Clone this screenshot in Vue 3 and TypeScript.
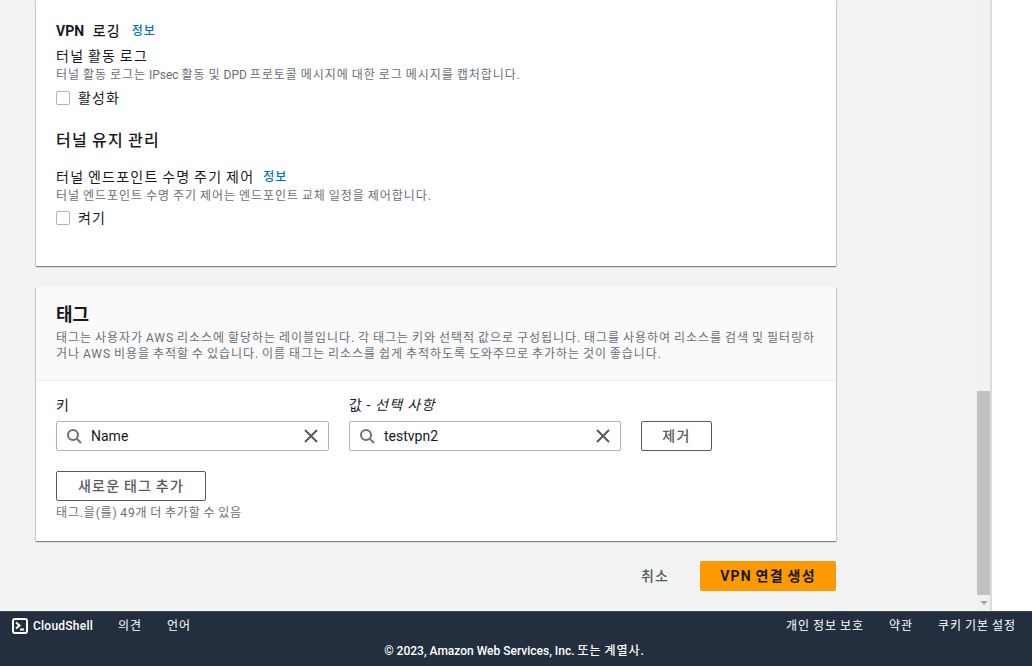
<script setup lang="ts">
const rightLinks: string[] = ['개인 정보 보호', '약관', '쿠키 기본 설정']
</script>

<template>
  <div class="page">
    <div class="body">
      <main class="content">
        <section class="card first">
          <div class="heading-row">
            <h3 class="h3 vpn"><span class="en">VPN</span> 로깅</h3>
            <a class="info">정보</a>
          </div>
          <div class="label">터널 활동 로그</div>
          <p class="desc">터널 활동 로그는 <span class="en">IPsec</span> 활동 및 <span class="en">DPD</span> 프로토콜 메시지에 대한 로그 메시지를 캡처합니다.</p>
          <label class="check"><span class="box"></span>활성화</label>
          <h3 class="h3 keep">터널 유지 관리</h3>
          <div class="heading-row second">
            <span class="label flat">터널 엔드포인트 수명 주기 제어</span>
            <a class="info">정보</a>
          </div>
          <p class="desc">터널 엔드포인트 수명 주기 제어는 엔드포인트 교체 일정을 제어합니다.</p>
          <label class="check"><span class="box"></span>켜기</label>
        </section>

        <section class="card tags">
          <header class="tags-head">
            <h2 class="h2">태그</h2>
            <p class="desc head-desc">태그는 사용자가 AWS 리소스에 할당하는 레이블입니다. 각 태그는 키와 선택적 값으로 구성됩니다. 태그를 사용하여 리소스를 검색 및 필터링하거나 AWS 비용을 추적할 수 있습니다. 이름 태그는 리소스를 쉽게 추적하도록 도와주므로 추가하는 것이 좋습니다.</p>
          </header>
          <div class="tags-body">
            <div class="tag-row">
              <div class="field">
                <div class="field-label">키</div>
                <div class="input">
                  <svg class="search" viewBox="0 0 16 16" width="16" height="16"><circle cx="7" cy="7" r="5" /><path d="M10.6 10.6 15 15" /></svg>
                  <span class="value en">Name</span>
                  <svg class="clear" viewBox="0 0 16 16" width="16" height="16"><path d="M2 2 14 14M14 2 2 14" /></svg>
                </div>
              </div>
              <div class="field narrow">
                <div class="field-label">값 - <i>선택 사항</i></div>
                <div class="input">
                  <svg class="search" viewBox="0 0 16 16" width="16" height="16"><circle cx="7" cy="7" r="5" /><path d="M10.6 10.6 15 15" /></svg>
                  <span class="value en">testvpn2</span>
                  <svg class="clear" viewBox="0 0 16 16" width="16" height="16"><path d="M2 2 14 14M14 2 2 14" /></svg>
                </div>
              </div>
              <button class="btn remove">제거</button>
            </div>
            <button class="btn add">새로운 태그 추가</button>
            <p class="desc limit">태그.을(를) 49개 더 추가할 수 있음</p>
          </div>
        </section>

        <div class="actions">
          <a class="cancel">취소</a>
          <button class="primary">VPN 연결 생성</button>
        </div>
      </main>
      <div class="scrollbar">
        <div class="track"></div>
        <div class="thumb"></div>
        <div class="arrow-box"><span class="arrow"></span></div>
      </div>
      <div class="gutter"></div>
    </div>
    <footer class="footer">
      <div class="foot-row">
        <a class="foot-link shell">
          <svg width="16" height="16" viewBox="0 0 16 16" class="shell-icon">
            <rect x="1" y="1" width="14" height="14" rx="2" />
            <path d="M4 4.5 7.5 7.5 4 10.5M8 11.5h4" />
          </svg>
          <b>CloudShell</b>
        </a>
        <a class="foot-link">의견</a>
        <a class="foot-link">언어</a>
        <span class="spacer"></span>
        <a v-for="l in rightLinks" :key="l" class="foot-link">{{ l }}</a>
      </div>
      <div class="copyright"><span class="en">© 2023, Amazon Web Services, Inc.</span> 또는 계열사.</div>
    </footer>
  </div>
</template>

<style>
html, body { margin: 0; overflow: hidden; }
</style>

<style scoped>
.page {
  width: 1032px;
  height: 666px;
  display: flex;
  flex-direction: column;
  overflow: hidden;
  font-family: Roboto, "Noto Sans CJK KR", sans-serif;
  color: #16191f;
  font-size: 14px;
  line-height: 20px;
}
.page * { letter-spacing: .08em; word-spacing: -.08em; }
.body { flex: 1; min-height: 0; display: flex; }
.content {
  width: 977px;
  box-sizing: border-box;
  background: #f2f3f3;
  padding: 0 141px 0 36px;
}
.card {
  background: #fff;
  box-shadow: 0 1px 1px 0 rgba(0, 28, 36, .3), 1px 1px 1px 0 rgba(0, 28, 36, .15), -1px 1px 1px 0 rgba(0, 28, 36, .15);
}
.first { height: 266px; box-sizing: border-box; padding: 21px 20px 0; }
.heading-row { display: flex; align-items: center; gap: 11px; }
.h3 { margin: 0; font-size: 14px; line-height: 20px; font-weight: 500; }
.page .vpn { word-spacing: 4px; }
.vpn .en { font-weight: 700; }
.info { color: #0073bb; font-size: 12px; font-weight: 500; }
.page .label { font-size: 14px; margin-top: 5px; line-height: 20px; letter-spacing: .09em; }
.page .label.flat { margin-top: 0; }
.desc { margin: 1px 0 0; font-size: 12px; line-height: 16px; color: #687078; }
.check { display: flex; align-items: center; gap: 8px; margin-top: 5px; height: 20px; color: #16191f; }
.box { width: 12px; height: 12px; border: 1px solid #aab7b8; border-radius: 2px; background: #fff; }
.keep { font-size: 16px; margin-top: 23px; }
.second { margin-top: 16px; gap: 9px; }
.first .check:last-child { margin-top: 4px; }
.tags { margin-top: 21px; height: 254px; }
.tags-head {
  box-sizing: border-box;
  height: 94px;
  padding: 16px 20px 0;
  background: #fafafa;
  border-bottom: 1px solid #eaeded;
}
.page .h2 { margin: 0; font-size: 18px; line-height: 24px; font-weight: 700; letter-spacing: 0; }
.page .head-desc { margin-top: 3px; line-height: 16px; }
.tags-body { padding: 14px 20px 0; }
.tag-row { display: flex; align-items: flex-end; gap: 20px; }
.field { width: 273px; }
.field.narrow { width: 272px; }
.field-label { font-size: 14px; line-height: 20px; margin-bottom: 6px; }
.page .field-label i { letter-spacing: .1em; }
.input {
  box-sizing: border-box;
  height: 30px;
  border: 1px solid #aab7b8;
  border-radius: 2px;
  display: flex;
  align-items: center;
  padding: 0 9px;
  gap: 9px;
}
.value { flex: 1; font-size: 14px; }
.search { fill: none; stroke: #687078; stroke-width: 2; }
.clear { fill: none; stroke: #545b64; stroke-width: 2; }
.page .btn {
  font: inherit;
  font-weight: 500;
  letter-spacing: .09em;
  background: #fff;
  color: #545b64;
  border: 1px solid #545b64;
  border-radius: 2px;
  height: 30px;
  padding: 0;
}
.remove { width: 71px; }
.add { display: block; width: 150px; margin-top: 20px; }
.page .limit { margin-top: 4px; letter-spacing: .07em; }
.actions { display: flex; justify-content: flex-end; align-items: center; gap: 31px; margin-top: 20px; }
.cancel { color: #545b64; font-weight: 500; }
.page .primary {
  font: inherit;
  font-weight: 700;
  letter-spacing: .09em;
  width: 136px;
  height: 30px;
  border: 0;
  border-radius: 2px;
  background: #ff9900;
  color: #16191f;
  padding: 0;
}
.scrollbar { width: 13px; background: #f1f1f1; display: flex; flex-direction: column; }
.track { height: 391px; }
.thumb { height: 204px; background: #c1c1c1; }
.arrow-box { flex: 1; display: flex; justify-content: center; align-items: center; }
.arrow { width: 0; height: 0; border: 4px solid transparent; border-top: 4px solid #a3a3a3; border-bottom: 0; }
.gutter { flex: 1; background: #fff; border-left: 2px solid #dcdcdc; }
.footer {
  height: 55px;
  background: #232f3e;
  border-top: 1px solid #414750;
  box-sizing: border-box;
  color: #fff;
  font-size: 12px;
}
.foot-row { display: flex; align-items: center; height: 28px; padding: 0 16px 0 12px; gap: 25px; }
.foot-link { color: #fff; line-height: 16px; }
.shell { display: flex; align-items: center; gap: 5px; }
.page .shell b { font-weight: 500; letter-spacing: .02em; word-spacing: 0; }
.shell-icon { fill: none; stroke: #fff; stroke-width: 2; }
.spacer { flex: 1; }
.copyright { text-align: center; line-height: 16px; margin-top: 3px; padding-right: 3px; font-weight: 500; }
.page .en { letter-spacing: 0; word-spacing: 0; }
</style>
